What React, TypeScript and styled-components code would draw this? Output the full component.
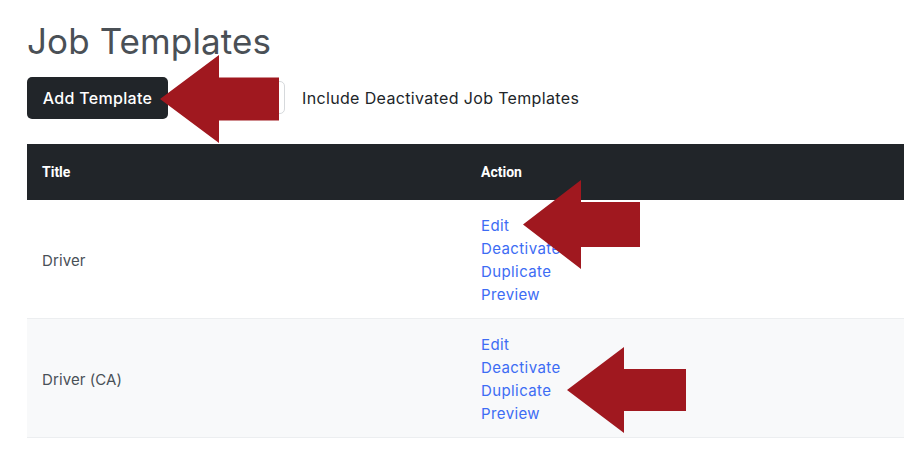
import React from 'react';
import styled, { createGlobalStyle } from 'styled-components';

const GlobalStyle = createGlobalStyle`
  html, body {
    margin: 0;
    padding: 0;
    background: #ffffff;
  }
  body {
    font-family: 'Inter', 'Liberation Sans', sans-serif;
    color: #212529;
  }
`;

type Template = { title: string };

const templates: Template[] = [{ title: 'Driver' }, { title: 'Driver (CA)' }];
const actions = ['Edit', 'Deactivate', 'Duplicate', 'Preview'];

type ArrowProps = { left: number; top: number; w: number; h: number; neck: number; shaft: number };

const Arrow: React.FC<ArrowProps> = ({ left, top, w, h, neck, shaft }) => {
  const mid = h / 2;
  const s1 = mid - shaft / 2;
  const s2 = mid + shaft / 2;
  return (
    <ArrowSvg style={{ left, top }} width={w} height={h} viewBox={`0 0 ${w} ${h}`}>
      <polygon
        points={`0,${mid} ${neck},0 ${neck},${s1} ${w},${s1} ${w},${s2} ${neck},${s2} ${neck},${h}`}
        fill="#a0181f"
      />
    </ArrowSvg>
  );
};

const App: React.FC = () => {
  return (
    <Page>
      <GlobalStyle />
      <Heading>Job Templates</Heading>
      <Toolbar>
        <AddButton>Add Template</AddButton>
        <CheckLabel>
          <CheckBox />
          Include Deactivated Job Templates
        </CheckLabel>
      </Toolbar>
      <Table>
        <thead>
          <tr>
            <Th>Title</Th>
            <Th>Action</Th>
          </tr>
        </thead>
        <tbody>
          {templates.map((t, i) => (
            <Row key={t.title} striped={i % 2 === 1}>
              <Td>{t.title}</Td>
              <Td>
                <Links>
                  {actions.map((a) => (
                    <Link key={a} href="#">{a}</Link>
                  ))}
                </Links>
              </Td>
            </Row>
          ))}
        </tbody>
      </Table>

      <Arrow left={160} top={55} w={119} h={88} neck={59} shaft={43} />
      <Arrow left={523} top={180} w={117} h={89} neck={58} shaft={45} />
      <Arrow left={567} top={347} w={119} h={86} neck={57} shaft={42} />
    </Page>
  );
};

const Page = styled.div`
  position: relative;
  padding: 20px 0 0 27px;
  width: 877px;
`;

const Heading = styled.h1`
  margin: 0;
  font-size: 35px;
  line-height: 43px;
  font-weight: 400;
  color: #4a5056;
  letter-spacing: 0.1px;
`;

const Toolbar = styled.div`
  display: flex;
  align-items: center;
  margin-top: 14px;
`;

const AddButton = styled.button`
  height: 42px;
  width: 141px;
  background: #212529;
  color: #ffffff;
  border: none;
  border-radius: 5px;
  font-family: 'Inter', 'Liberation Sans', sans-serif;
  font-size: 16px;
  font-weight: 500;
  letter-spacing: 0.3px;
  padding: 0;
  cursor: pointer;
`;

const CheckLabel = styled.label`
  display: flex;
  align-items: center;
  margin-left: 85px;
  margin-top: -1px;
  font-size: 16px;
  letter-spacing: 0.35px;
  color: #212529;
`;

const CheckBox = styled.span`
  display: inline-block;
  width: 30px;
  height: 31px;
  border: 1px solid #d6d9dc;
  border-radius: 5px;
  background: #fff;
  margin-right: 17px;
`;

const Table = styled.table`
  width: 877px;
  margin-top: 25px;
  border-collapse: collapse;
  table-layout: fixed;
`;

const Th = styled.th`
  background: #212529;
  color: #ffffff;
  text-align: left;
  font-family: 'Roboto', 'Liberation Sans', sans-serif;
  font-weight: 700;
  font-size: 14px;
  height: 56px;
  padding: 0 15px;
  &:first-child {
    width: 409px;
  }
`;

const Row = styled.tr<{ striped: boolean }>`
  background: ${(p) => (p.striped ? '#f8f9fa' : '#ffffff')};
  border-bottom: 1px solid #eceef0;
`;

const Td = styled.td`
  padding: 14px 15px 12px;
  font-size: 15px;
  letter-spacing: 0.1px;
  color: #495057;
  vertical-align: middle;
  height: 92px;
`;

const Links = styled.div`
  display: flex;
  flex-direction: column;
`;

const Link = styled.a`
  color: #3d6cf4;
  text-decoration: none;
  font-size: 15px;
  line-height: 23px;
  letter-spacing: 0.4px;
`;

const ArrowSvg = styled.svg`
  position: absolute;
  display: block;
`;

export default App;
